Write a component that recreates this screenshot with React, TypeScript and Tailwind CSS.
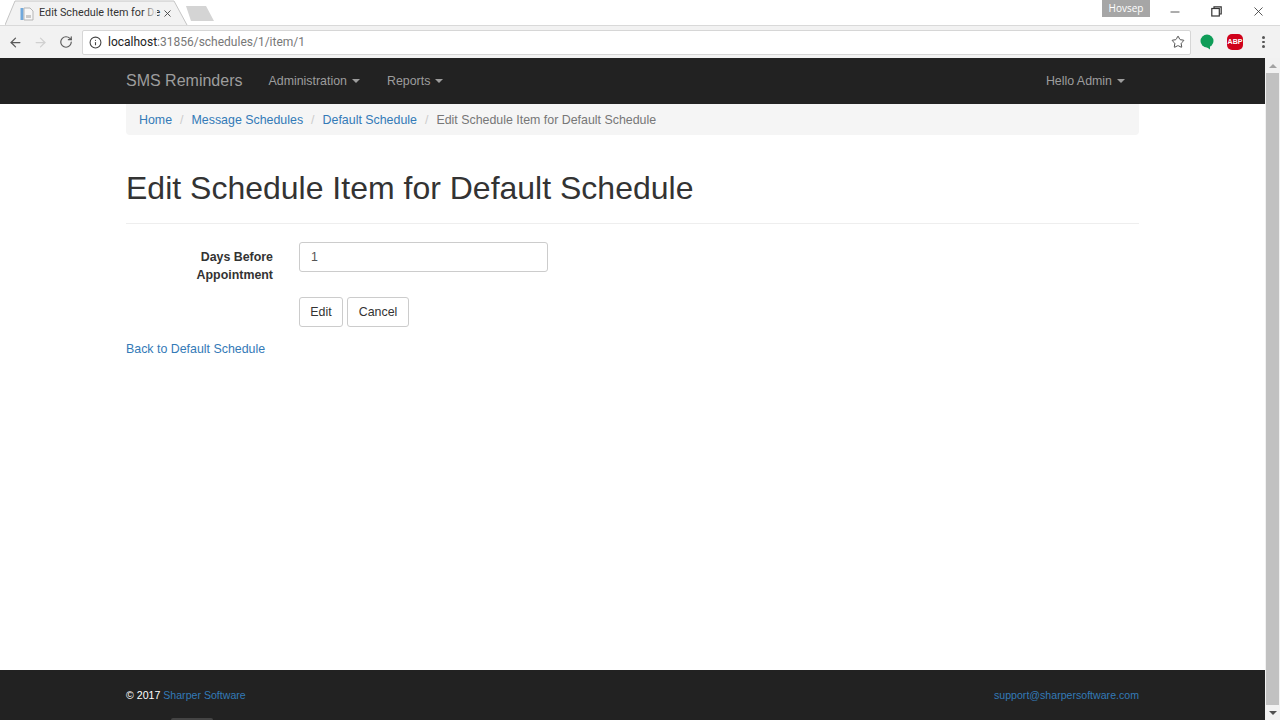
import { ArrowLeft, ArrowRight, RotateCw, Info, Star, Minus, X } from 'lucide-react';

function Caret() {
  return <span className="ml-[5px] inline-block h-0 w-0 border-x-[4px] border-t-[4px] border-x-transparent border-t-[#9d9d9d] align-middle" />;
}

function ChromeBar() {
  return (
    <div className="h-[58px] shrink-0 bg-[#f2f2f2]">
      {/* Tab strip */}
      <div className="relative flex h-[25px] bg-white">
        <div className="relative ml-[5px] h-[25px] w-[184px]">
          <svg className="absolute inset-0" width="184" height="25" viewBox="0 0 184 25">
            <path d="M0 25 L10 1 H169 L182 25" fill="#f2f2f2" stroke="#c4c4c4" strokeWidth="1" />
          </svg>
          <div className="relative flex h-[25px] items-center pl-[15px] pt-[2px]">
            <svg width="14" height="14" viewBox="0 0 14 14" className="shrink-0">
              <rect x="0.5" y="1" width="3" height="12" fill="#6fa8dc" />
              <path d="M4 1 H10 L13 4 V13 H4 Z" fill="#f7f7f7" stroke="#b5b5b5" />
              <rect x="6" y="8" width="5" height="3" fill="#c9c9c9" />
            </svg>
            <div className="relative ml-[5px] w-[118px] whitespace-nowrap font-['Roboto',sans-serif] text-[10.8px] text-[#333]">
              Edit Schedule Item for De
              <span className="absolute inset-y-0 right-0 w-[14px] bg-gradient-to-r from-transparent to-[#f2f2f2]" />
            </div>
            <X size={11} strokeWidth={2} className="ml-[5px] text-[#444]" />
          </div>
        </div>
        <svg className="ml-[-4px] mt-[6px]" width="32" height="15" viewBox="0 0 32 15">
          <path d="M1 0 H21 L29 15 H6 Z" fill="#d4d4d4" />
        </svg>
        <div className="ml-auto flex h-[25px] items-start">
          <div className="mr-[18px] flex h-[17px] w-[48px] items-center justify-center bg-[#a6a6a6] font-['Open_Sans',sans-serif] text-[10px] text-white">
            Hovsep
          </div>
          <div className="flex items-center pt-[4px]">
            <Minus size={14} strokeWidth={1.5} className="mr-[29px] text-[#444]" />
            <svg width="11" height="11" viewBox="0 0 11 11" className="mr-[29px]" fill="none" stroke="#333" strokeWidth="1.2">
              <rect x="0.8" y="2.5" width="7.5" height="7.5" />
              <path d="M3 2.5 V0.8 H10.2 V8 H8.3" />
            </svg>
            <X size={15} strokeWidth={1.3} className="mr-[14px] text-[#333]" />
          </div>
        </div>
      </div>
      {/* Address bar */}
      <div className="flex h-[33px] items-center border-t border-[#d9d9d9]">
        <ArrowLeft size={15} strokeWidth={2} className="ml-[8px] text-[#5a5a5a]" />
        <ArrowRight size={15} strokeWidth={2} className="ml-[10px] text-[#d0d0d0]" />
        <RotateCw size={14} strokeWidth={2} className="ml-[11px] text-[#5a5a5a]" />
        <div className="ml-[9px] flex h-[25px] w-[1109px] items-center rounded-[2px] border border-[#d6d6d6] bg-white pl-[6px]">
          <Info size={13} strokeWidth={2} className="text-[#444]" />
          <span className="ml-[6px] font-['Roboto',sans-serif] text-[12px] text-[#222]">
            localhost<span className="text-[#777]">:31856/schedules/1/item/1</span>
          </span>
          <Star size={14} strokeWidth={1.6} className="ml-auto mr-[5px] text-[#444]" />
        </div>
        <svg width="14" height="16" viewBox="0 0 14 16" className="ml-[9px]">
          <circle cx="7" cy="7" r="6.5" fill="#0f9d58" />
          <path d="M5 12 H10 V15.5 Z" fill="#0f9d58" />
        </svg>
        <div className="ml-[13px] flex h-[16px] w-[16px] items-center justify-center rounded-[5px] bg-[#d0021b] font-['Liberation_Sans',sans-serif] text-[7px] font-bold text-white">
          ABP
        </div>
        <div className="ml-[19px] flex flex-col gap-[2px]">
          <span className="h-[2.5px] w-[2.5px] rounded-full bg-[#555]" />
          <span className="h-[2.5px] w-[2.5px] rounded-full bg-[#555]" />
          <span className="h-[2.5px] w-[2.5px] rounded-full bg-[#555]" />
        </div>
      </div>
    </div>
  );
}

function Scrollbar() {
  return (
    <div className="flex w-[15px] shrink-0 flex-col bg-[#f1f1f1]">
      <div className="flex h-[15px] items-center justify-center">
        <span className="h-0 w-0 border-x-[4px] border-b-[4px] border-x-transparent border-b-[#a3a3a3]" />
      </div>
      <div className="mx-[1px] flex-1 bg-[#c1c1c1]" />
      <div className="flex h-[15px] items-center justify-center">
        <span className="h-0 w-0 border-x-[4px] border-t-[4px] border-x-transparent border-t-[#505050]" />
      </div>
    </div>
  );
}

export default function App() {
  return (
    <div className="flex h-[720px] w-[1280px] flex-col overflow-hidden bg-white font-['Liberation_Sans',sans-serif] text-[12.4px] text-[#333]">
      <ChromeBar />
      <div className="flex min-h-0 flex-1">
        <div className="flex min-w-0 flex-1 flex-col">
          {/* Navbar */}
          <nav className="flex h-[46px] shrink-0 items-center bg-[#222] pl-[126px] pr-[140px] text-[#9d9d9d]">
            <span className="text-[16px] text-[#9d9d9d]">SMS Reminders</span>
            <span className="ml-[26px]">Administration<Caret /></span>
            <span className="ml-[27px]">Reports<Caret /></span>
            <span className="ml-auto">Hello Admin<Caret /></span>
          </nav>

          <main className="flex flex-1 flex-col px-[126px]">
            {/* Breadcrumb */}
            <div className="flex h-[31px] items-center rounded-b-[4px] bg-[#f5f5f5] px-[13px] pt-[1px]">
              <a className="text-[#337ab7]">Home</a>
              <span className="px-[8px] text-[#ccc]">/</span>
              <a className="text-[#337ab7]">Message Schedules</a>
              <span className="px-[8px] text-[#ccc]">/</span>
              <a className="text-[#337ab7]">Default Schedule</a>
              <span className="px-[8px] text-[#ccc]">/</span>
              <span className="text-[#777]">Edit Schedule Item for Default Schedule</span>
            </div>

            <h1 className="mt-[33px] text-[32px] leading-[40px] text-[#333]">Edit Schedule Item for Default Schedule</h1>
            <hr className="mt-[15px] border-[#eee]" />

            {/* Form */}
            <div className="mt-[18px] flex">
              <label className="mt-[6px] w-[147px] text-right font-bold leading-[18px]">
                Days Before
                <br />
                Appointment
              </label>
              <div className="ml-[26px] flex h-[30px] w-[249px] items-center rounded-[3px] border border-[#ccc] pl-[11px] text-[#555]">
                1
              </div>
            </div>
            <div className="ml-[173px] mt-[13px] flex gap-[4px]">
              <button className="h-[30px] w-[44px] rounded-[3px] border border-[#ccc] bg-white">Edit</button>
              <button className="h-[30px] w-[62px] rounded-[3px] border border-[#ccc] bg-white">Cancel</button>
            </div>
            <a className="mt-[14px] leading-[16px] text-[#337ab7]">Back to Default Schedule</a>
          </main>

          {/* Footer */}
          <footer className="relative flex h-[50px] shrink-0 items-center justify-between bg-[#222] px-[126px] pt-[1px] text-[10.6px]">
            <span className="text-white">
              © 2017 <a className="text-[#337ab7]">Sharper Software</a>
            </span>
            <a className="text-[#337ab7]">support@sharpersoftware.com</a>
            <span className="absolute bottom-0 left-[171px] h-[2px] w-[42px] rounded-t-[2px] bg-[#444]" />
          </footer>
        </div>
        <Scrollbar />
      </div>
    </div>
  );
}
